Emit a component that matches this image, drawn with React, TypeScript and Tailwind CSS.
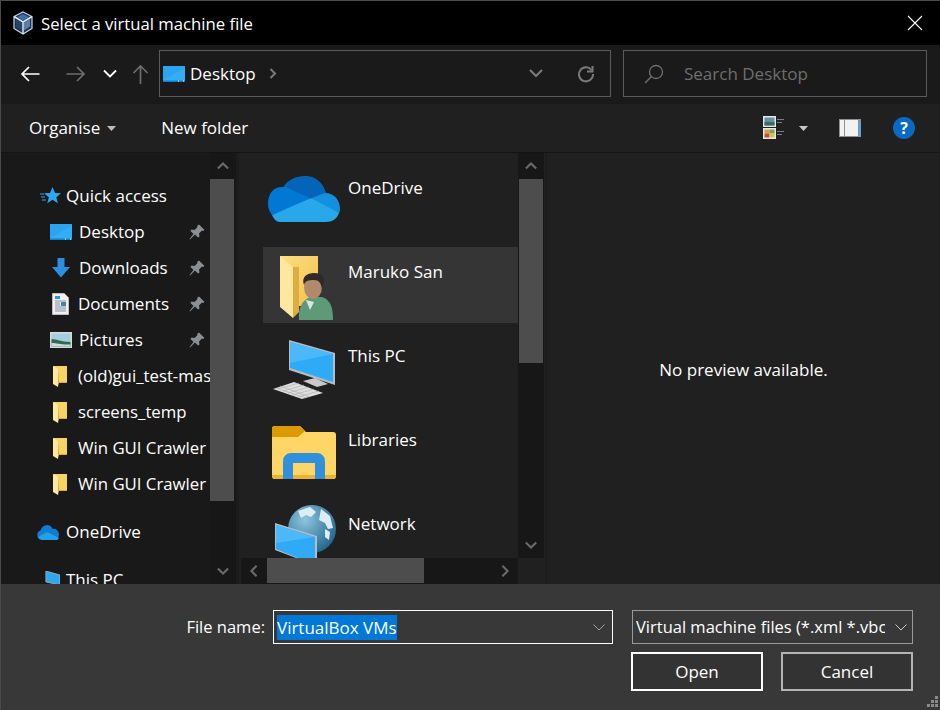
import type { ReactNode } from "react";

function DesktopIcon({ className }: { className?: string }) {
  return (
    <svg className={className} viewBox="0 0 22 16">
      <rect x="0" y="0" width="22" height="16" fill="#33aef5" />
      <path d="M0 0h22v2L0 14z" fill="#2fa4ee" />
      <path d="M0 14.500h22V16H0z" fill="#0f7fd6" />
      <rect x="15" y="14.500" width="1" height="1" fill="#fff" />
      <rect x="20" y="14.500" width="1" height="1" fill="#fff" />
    </svg>
  );
}

function Pin() {
  return (
    <svg className="absolute left-[188px] top-[10px] h-4 w-4" viewBox="0 0 16 16">
      <path d="M10 0.500l5.500 5.500-1.500 1-1-.5-3 3 .5 3-1.500 1-3-3L1 15.500l-.5-.5L4.500 10l-3-3 1-1.500 3 .5 3-3-.5-1z" fill="#8b8f93" />
    </svg>
  );
}

function SmallFolder() {
  return (
    <svg className="ml-[52px] h-[21px] w-[15px] shrink-0" viewBox="0 0 15 21">
      <path d="M0 0h14v17H0z" fill="#f6d365" />
      <path d="M0 0l5 3v18l-5-3z" fill="#ffe9a0" />
      <path d="M5 3v18l1-4h8v-1H6z" fill="#d9a93c" />
    </svg>
  );
}

function NavRow({ icon, label, pin, top }: { icon: ReactNode; label: string; pin?: boolean; top?: boolean }) {
  return (
    <div className="relative flex h-9 items-center whitespace-nowrap">
      {icon}
      <span className={top ? "ml-[6px] text-white" : "ml-[7px] text-white"}>{label}</span>
      {pin && <Pin />}
    </div>
  );
}

function FolderRow({ label }: { label: string }) {
  return (
    <div className="flex h-9 items-center whitespace-nowrap">
      <SmallFolder />
      <span className="ml-[10px] text-[16.800px] text-white">{label}</span>
    </div>
  );
}

function Arrow({ dir }: { dir: "up" | "down" | "left" | "right" }) {
  const d = {
    up: "M1 9l6-6 6 6",
    down: "M1 3l6 6 6-6",
    left: "M9 1L3 7l6 6",
    right: "M3 1l6 6-6 6",
  }[dir];
  return (
    <svg className="h-3 w-3" viewBox={dir === "up" || dir === "down" ? "0 0 14 12" : "0 0 12 14"}>
      <path d={d} fill="none" stroke="#6a6a6a" strokeWidth="2.500" />
    </svg>
  );
}

function VScroll({ thumb, thumbClass }: { thumb: number; thumbClass: string }) {
  return (
    <div className="flex h-full w-[26px] shrink-0 flex-col bg-[#171717]">
      <div className="flex h-[26px] shrink-0 items-center justify-center">
        <Arrow dir="up" />
      </div>
      <div className={thumbClass} style={{ height: thumb }} />
      <div className="flex-1" />
      <div className="flex h-[26px] shrink-0 items-center justify-center">
        <Arrow dir="down" />
      </div>
    </div>
  );
}

function Tile({ label, children, active }: { label: string; children: ReactNode; active?: boolean }) {
  return (
    <div className={active ? "flex h-[76px] shrink-0 bg-[#353535]" : "flex h-[76px] shrink-0"}>
      <svg className="h-[76px] w-[85px] shrink-0 overflow-visible" viewBox="0 0 85 76">
        {children}
      </svg>
      <span className="pt-[13px] leading-6 text-white">{label}</span>
    </div>
  );
}

export default function App() {
  return (
    <div className="flex h-[710px] w-[940px] flex-col overflow-hidden border-l border-t border-[#4a4a4a] bg-[#202020] font-['Open_Sans',sans-serif] text-[17px] text-white">
      {/* title bar */}
      <div className="flex h-11 shrink-0 items-center bg-black pl-[12px] pr-[17px]">
        <svg className="h-[24px] w-[20px]" viewBox="0 0 20 24">
          <path d="M10 1l9 4.500v12L10 23l-9-5.500v-12z" fill="#1c3350" stroke="#c9d6e6" strokeWidth="1.200" />
          <path d="M10 11l9-5.500M10 11L1 5.500M10 11v12" stroke="#dfe8f2" strokeWidth="1.500" fill="none" />
          <path d="M10 3l6 3-6 3.500L4 6z" fill="#3f6ea8" />
          <path d="M3 8l6 3.500v8L3 16z" fill="#24456e" />
          <path d="M17 8l-6 3.500v8l6-4z" fill="#5a7fa8" />
        </svg>
        <span className="ml-[8px] flex-1 pt-px text-[16.700px]">Select a virtual machine file</span>
        <svg className="h-[16px] w-[16px]" viewBox="0 0 16 16">
          <path d="M1 1l14 14M15 1L1 15" stroke="#fff" strokeWidth="1.100" />
        </svg>
      </div>

      {/* nav row */}
      <div className="flex h-[59px] shrink-0 items-center bg-[#1a1a1a] pb-[2px]">
        <svg className="ml-[19px] h-[16px] w-[20px]" viewBox="0 0 20 16">
          <path d="M19.500 8H2M9 1L2 8l7 7" fill="none" stroke="#fff" strokeWidth="1.700" />
        </svg>
        <svg className="ml-[26px] h-[16px] w-[20px]" viewBox="0 0 20 16">
          <path d="M.5 8H18M11 1l7 7-7 7" fill="none" stroke="#6e6e6e" strokeWidth="1.700" />
        </svg>
        <svg className="ml-[17px] h-[9px] w-[14px]" viewBox="0 0 14 9">
          <path d="M1 1.500l6 6 6-6" fill="none" stroke="#fff" strokeWidth="1.800" />
        </svg>
        <svg className="ml-[15px] h-[20px] w-[17px]" viewBox="0 0 17 20">
          <path d="M8.500 20V2M1.500 9l7-7 7 7" fill="none" stroke="#6e6e6e" strokeWidth="1.700" />
        </svg>
        <div className="ml-[10px] flex h-[47px] w-[452px] items-center border border-[#5a5a5a]">
          <DesktopIcon className="ml-[3px] h-4 w-[22px]" />
          <span className="ml-[5px]">Desktop</span>
          <svg className="ml-[13px] h-[11px] w-[8px]" viewBox="0 0 8 11">
            <path d="M1.500 1l4.500 4.500L1.500 10" fill="none" stroke="#7a7a7a" strokeWidth="2" />
          </svg>
          <div className="flex-1" />
          <svg className="mr-[34px] h-[9px] w-[14px]" viewBox="0 0 14 9">
            <path d="M1 1l6 6 6-6" fill="none" stroke="#7a7a7a" strokeWidth="2.200" />
          </svg>
          <svg className="mr-[15px] h-[18px] w-[18px]" viewBox="0 0 18 18">
            <path d="M14.500 5A7 7 0 1 0 16 9" fill="none" stroke="#7a7a7a" strokeWidth="2" />
            <path d="M15.500 1v5.500H10" fill="none" stroke="#7a7a7a" strokeWidth="2" />
          </svg>
        </div>
        <div className="ml-3 flex h-[47px] w-[304px] items-center border border-[#5a5a5a]">
          <svg className="ml-[20px] h-[20px] w-[20px]" viewBox="0 0 20 20">
            <circle cx="12" cy="8" r="6.500" fill="none" stroke="#6e6e6e" strokeWidth="1.300" />
            <path d="M7.500 12.500L1 19" stroke="#6e6e6e" strokeWidth="1.500" />
          </svg>
          <span className="ml-[20px] text-[#6e6e6e]">Search Desktop</span>
        </div>
      </div>

      {/* toolbar */}
      <div className="flex h-[49px] shrink-0 items-center border-b border-[#141414] bg-[#202020]">
        <span className="ml-[28px]">Organise</span>
        <svg className="ml-[7px] h-[5px] w-[9px]" viewBox="0 0 9 5">
          <path d="M0 0h9L4.500 5z" fill="#bdbdbd" />
        </svg>
        <span className="ml-[45px]">New folder</span>
        <div className="flex-1" />
        <svg className="h-[24px] w-[22px]" viewBox="0 0 22 24">
          <rect x="0" y="0" width="13" height="11" fill="#e8e8e8" />
          <rect x="1.500" y="1.500" width="10" height="8" fill="#5f93a8" />
          <rect x="1.500" y="6" width="10" height="3.500" fill="#3d6b55" />
          <rect x="0" y="12" width="13" height="11" fill="#e8e8e8" />
          <rect x="1.500" y="13.500" width="5" height="4" fill="#d9a23c" />
          <rect x="6.500" y="13.500" width="5" height="4" fill="#7ba05b" />
          <rect x="1.500" y="17.500" width="5" height="4" fill="#c0503c" />
          <rect x="6.500" y="17.500" width="5" height="4" fill="#d8c050" />
          <path d="M14 3.500h7M14 6.500h5M14 15.500h7M14 18.500h5" stroke="#7d7d7d" />
        </svg>
        <svg className="ml-[14px] h-[5px] w-[9px]" viewBox="0 0 9 5">
          <path d="M0 0h9L4.500 5z" fill="#c8c8c8" />
        </svg>
        <svg className="ml-[31px] h-[18px] w-[22px]" viewBox="0 0 22 18">
          <rect x="0" y="0" width="22" height="18" fill="#8f8f8f" />
          <rect x="1" y="1" width="4" height="16" fill="#f2f2f2" />
          <rect x="6" y="1" width="13" height="16" fill="#f2f2f2" />
          <rect x="20" y="3" width="2" height="15" fill="#58a5e8" />
        </svg>
        <div className="ml-[32px] mr-[25px] flex h-[22px] w-[22px] items-center justify-center rounded-full bg-[#0a69c2] text-[16px] font-bold leading-none">
          ?
        </div>
      </div>

      {/* panes */}
      <div className="flex h-[431px] shrink-0">
        <div className="flex w-[235px] shrink-0 bg-[#191919]">
          <div className="h-full w-[209px] shrink-0 overflow-hidden pt-[25px]">
            <NavRow
              top
              label="Quick access"
              icon={
                <svg className="ml-[39px] h-[20px] w-[20px] shrink-0 overflow-visible" viewBox="0 0 20 20">
                  <path d="M12.500 1l2.500 6 6 .3-4.700 3.900 1.600 6-5.400-3.400-5.200 3.400 1.600-6L4 7.300l6-.3z" fill="#2ea7f2" />
                  <path d="M0 8h4M1 11h4M2 14h4" stroke="#2ea7f2" />
                </svg>
              }
            />
            <NavRow label="Desktop" pin icon={<DesktopIcon className="ml-[49px] h-4 w-[22px] shrink-0" />} />
            <NavRow
              label="Downloads"
              pin
              icon={
                <svg className="ml-[49px] h-[20px] w-[22px] shrink-0" viewBox="0 0 20 20">
                  <path d="M6.500 0h7v9H19l-9 10.500L1 9h5.500z" fill="#2e8fe0" />
                </svg>
              }
            />
            <NavRow
              label="Documents"
              pin
              icon={
                <svg className="ml-[51px] mr-[2px] h-[22px] w-[17px] shrink-0" viewBox="0 0 17 22">
                  <path d="M0 0h12l5 5v17H0z" fill="#f0f0f0" stroke="#8a8a8a" />
                  <path d="M3 3h5v3H3z" fill="#3d8fdc" />
                  <path d="M3 8h11M3 10h5M3 12h5M3 14h11M3 16h11M3 18h11" stroke="#7c93a8" />
                  <rect x="9" y="9" width="5" height="4" fill="#4a80a8" />
                </svg>
              }
            />
            <NavRow
              label="Pictures"
              pin
              icon={
                <svg className="ml-[49px] h-[16px] w-[22px] shrink-0" viewBox="0 0 22 16">
                  <rect width="22" height="16" fill="#d9d9d9" />
                  <rect x="1.500" y="1.500" width="19" height="13" fill="#a5cfe0" />
                  <path d="M1.500 7c6 0 9 3 19 3v4.500h-19z" fill="#33684f" />
                  <path d="M1.500 11c6 0 9 2 19 1.500v2h-19z" fill="#c8dde4" />
                </svg>
              }
            />
            <FolderRow label="(old)gui_test-master" />
            <FolderRow label="screens_temp" />
            <FolderRow label="Win GUI Crawler" />
            <FolderRow label="Win GUI Crawler" />
            <div className="h-3" />
            <NavRow
              top
              label="OneDrive"
              icon={
                <svg className="ml-[36px] h-[16px] w-[23px] shrink-0" viewBox="0 0 25 16" preserveAspectRatio="none">
                  <path d="M5 16a5 5 0 0 1-1-9.800A7 7 0 0 1 17 5a5.500 5.500 0 1 1 2.500 11z" fill="#0f7dd4" />
                  <path d="M1 13l10-5 13 6-2 2H5z" fill="#23a0e8" />
                </svg>
              }
            />
            <div className="h-3" />
            <NavRow
              top
              label="This PC"
              icon={
                <svg className="ml-[44px] h-[18px] w-[15px] shrink-0" viewBox="0 0 17 18" preserveAspectRatio="none">
                  <path d="M1 0l16 4v10L1 11z" fill="#2ea7f2" stroke="#b5b5b5" strokeWidth=".8" />
                  <path d="M3 14l8 3H5z" fill="#cfcfcf" />
                </svg>
              }
            />
          </div>
          <VScroll thumb={322} thumbClass="mr-[2px] bg-[#4d4d4d]" />
        </div>

        <div className="flex w-[310px] shrink-0 flex-col border-l-[3px] border-[#1c1c1c]">
          <div className="flex h-[405px] shrink-0">
            <div className="flex w-[279px] shrink-0 flex-col gap-2 overflow-hidden pl-6 pt-[10px]">
              <Tile label="OneDrive">
                <path d="M19 27C22 18 32 13 42 13C52 13 60 19 63 30L48 35L30 30Z" fill="#0364b8" />
                <path d="M19 24C10 24 5 31 5 41C5 46 7 49 9 52L30 44L48 35L33 29C29 26 24 24 19 24Z" fill="#0078d4" />
                <path d="M48 35L62 30C72 30 77 38 77 46C77 48 76 50 76 50L60 44Z" fill="#1490df" />
                <path d="M9 52L48 35L76 50C74 56 69 59 63 59H17C13 59 11 56 9 52Z" fill="#28a8ea" />
              </Tile>
              <Tile label="Maruko San" active>
                <defs>
                  <linearGradient id="mf" x1="0" y1="0" x2="1" y2="1">
                    <stop offset="0" stopColor="#ffdf7e" />
                    <stop offset="1" stopColor="#f0c050" />
                  </linearGradient>
                </defs>
                <path d="M17 9h38v50H17z" fill="url(#mf)" />
                <path d="M17 9l13 11v51L17 60z" fill="#ffe7a0" />
                <path d="M30 20v51l6-6V20z" fill="#e0ac40" />
                <path d="M36 73c-1-13 3-19 11-23h12c9 3 11 11 11 23z" fill="#5f9a78" />
                <path d="M43 53l4 10 4-8z" fill="#d8e8e8" />
                <ellipse cx="50" cy="40" rx="9" ry="12" fill="#b08a6a" />
                <path d="M41 38c-3-8 3-12 10-12 7 0 11 3 10 10l-2 6c-1-6-3-9-8-9-6 0-9 1-10 5z" fill="#2e2a28" />
              </Tile>
              <Tile label="This PC">
                <path d="M26 9L72 22V54L26 39Z" fill="#b5bcc4" />
                <path d="M27 11L70 23V51L27 37Z" fill="#2eaaf6" />
                <path d="M27 11L70 23L27 32Z" fill="#4ab8fa" />
                <path d="M40 50L52 47L65 53L54 56Z" fill="#c9c9c9" />
                <path d="M10 58L31 51L60 62L39 68Z" fill="#dedede" />
                <path d="M15 58L36 52M20 60L41 54M25 62L46 56M30 64L51 58M35 66L56 60M17 55L47 66M13 57L43 67" stroke="#a9a9a9" strokeWidth=".6" />
              </Tile>
              <Tile label="Libraries">
                <path d="M9 14a3 3 0 0 1 3-3h25l6 6h27a3 3 0 0 1 3 3v41a3 3 0 0 1-3 3H12a3 3 0 0 1-3-3z" fill="#ffd666" />
                <path d="M9 14a3 3 0 0 1 3-3h25l5 5-7 6H9z" fill="#dc9a00" />
                <path d="M9 60v1a3 3 0 0 0 3 3h58a3 3 0 0 0 3-3v-1z" fill="#f0b030" />
                <path d="M20 64V46a8 8 0 0 1 8-8h26a8 8 0 0 1 8 8v18H52V48H30v16z" fill="#3090dc" />
              </Tile>
              <Tile label="Network">
                <defs>
                  <radialGradient id="gl" cx=".35" cy=".3" r=".8">
                    <stop offset="0" stopColor="#8cc5de" />
                    <stop offset="1" stopColor="#1d5f86" />
                  </radialGradient>
                </defs>
                <circle cx="49" cy="30" r="24" fill="url(#gl)" />
                <path d="M35 12l12-4 6 5-5 5-5-2-5 3zM58 10l9 7 3 12-5 1-3-6-6-3zM62 30l5 3-1 8-4-3z" fill="#dceef5" />
                <path d="M12 24L54 37V67L12 51Z" fill="#b5bcc4" />
                <path d="M13 26L52 38V66L13 50Z" fill="#2eaaf6" />
                <path d="M13 26L52 38L13 44Z" fill="#4ab8fa" />
              </Tile>
            </div>
            <VScroll thumb={184} thumbClass="mx-px bg-[#4d4d4d]" />
          </div>
          <div className="flex h-[26px] shrink-0 bg-[#202020]">
            <div className="ml-[2px] flex w-[277px] bg-[#171717]">
              <div className="flex w-[26px] items-center justify-center">
                <Arrow dir="left" />
              </div>
              <div className="mb-px w-[157px] bg-[#4d4d4d]" />
              <div className="flex-1" />
              <div className="flex w-[26px] items-center justify-center">
                <Arrow dir="right" />
              </div>
            </div>
          </div>
        </div>

        <div className="flex flex-1 items-center justify-center border-l border-[#1a1a1a] pt-[3px]">
          <span>No preview available.</span>
        </div>
      </div>

      {/* bottom */}
      <div className="relative flex flex-1 flex-col items-end bg-[#383838] pr-[27px] pt-[26px]">
        <div className="flex items-start">
          <span className="mr-[8px] flex h-[34px] items-center text-[16.500px]">File name:</span>
          <div className="flex h-[34px] w-[340px] items-center border border-white pl-[3px]">
            <span className="flex h-[25px] items-center whitespace-nowrap bg-[#0078d7] leading-none">VirtualBox VMs</span>
            <div className="flex-1" />
            <svg className="mr-[7px] h-[7px] w-[12px]" viewBox="0 0 12 7">
              <path d="M.5.5L6 6 11.500.5" fill="none" stroke="#a0a0a0" />
            </svg>
          </div>
          <div className="ml-[19px] flex h-[34px] w-[281px] items-center border border-[#9a9a9a] pl-[3px] text-[16.500px]">
            <span className="w-[249px] overflow-hidden whitespace-nowrap">Virtual machine files (*.xml *.vbox)</span>
            <svg className="ml-[10px] h-[7px] w-[12px]" viewBox="0 0 12 7">
              <path d="M.5.5L6 6 11.500.5" fill="none" stroke="#c8c8c8" />
            </svg>
          </div>
        </div>
        <div className="mt-[8px] flex gap-[18px]">
          <button className="h-[39px] w-[132px] border-2 border-white bg-[#333333]">Open</button>
          <button className="h-[39px] w-[132px] border-2 border-[#b4b4b4] bg-[#333333]">Cancel</button>
        </div>
        <svg className="absolute bottom-[2px] right-[2px] h-[12px] w-[12px]" viewBox="0 0 12 12">
          <path d="M9 0h3v3H9zM5 4h3v3H5zM9 4h3v3H9zM1 8h3v3H1zM5 8h3v3H5zM9 8h3v3H9z" fill="#8a8a8a" />
        </svg>
      </div>
    </div>
  );
}
